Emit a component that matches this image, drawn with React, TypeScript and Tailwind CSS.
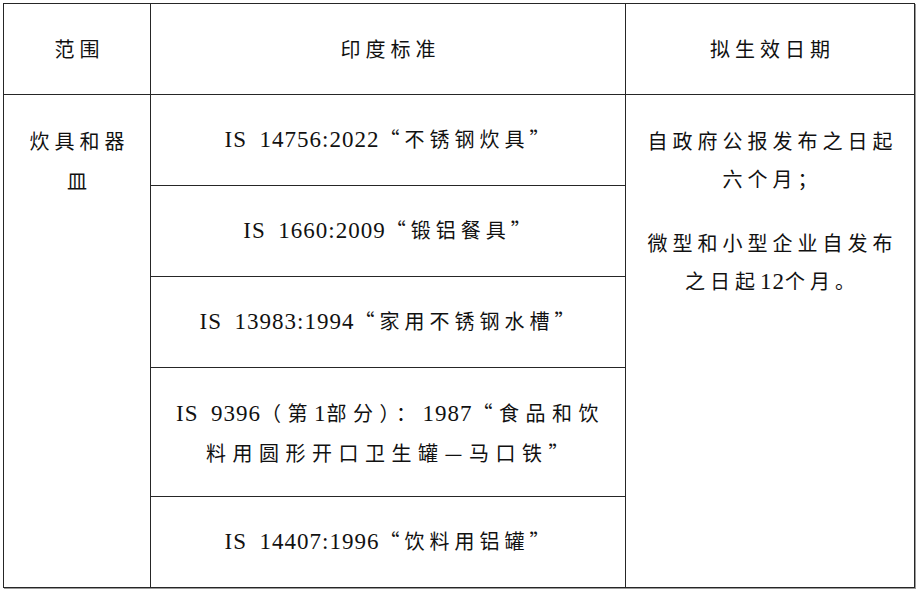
import React from "react";

const EN = "\u2002";

function L({ children }: { children: React.ReactNode }) {
  return (
    <span className="font-['Liberation_Serif',serif] text-[23px] tracking-[1px]">{children}</span>
  );
}

function C({ children, wide }: { children: React.ReactNode; wide?: boolean }) {
  return <span className={wide ? "tracking-[6.5px]" : "tracking-[5px]"}>{children}</span>;
}

export default function App() {
  return (
    <div className="w-[918px] h-[590px] bg-white pt-[3px] pl-[3px] font-['Noto_Sans_CJK_SC',sans-serif] text-[20px] text-[#111]">
      <div className="w-[912px] border-l border-t border-[#262626] shadow-[1px_1px_0_#9a9a9a]">
        {/* header */}
        <div className="flex h-[91px]">
          <div className="w-[147px] border-r border-b border-[#262626] flex items-center justify-center pl-[5px] tracking-[5px]">
            范围
          </div>
          <div className="w-[475px] border-r border-b border-[#262626] flex items-center justify-center pl-[5px] tracking-[5px]">
            印度标准
          </div>
          <div className="w-[289px] border-r border-b border-[#262626] flex items-center justify-center pl-[5px] tracking-[5px]">
            拟生效日期
          </div>
        </div>
        {/* body */}
        <div className="flex">
          <div className="w-[147px] h-[493px] border-r border-b border-[#262626] pt-[26px] pl-[5px] text-center leading-[40px] tracking-[5px]">
            炊具和器
            <br />皿
          </div>
          <div className="w-[475px] flex flex-col">
            <div className="h-[91px] border-r border-b border-[#262626] flex items-center justify-center pl-[3px]">
              <span>
                <L>IS{EN}14756:2022</L>
                <C>“不锈钢炊具”</C>
              </span>
            </div>
            <div className="h-[91px] border-r border-b border-[#262626] flex items-center justify-center pl-[3px]">
              <span>
                <L>IS{EN}1660:2009</L>
                <C>“锻铝餐具”</C>
              </span>
            </div>
            <div className="h-[91px] border-r border-b border-[#262626] flex items-center justify-center pl-[3px]">
              <span>
                <L>IS{EN}13983:1994</L>
                <C>“家用不锈钢水槽”</C>
              </span>
            </div>
            <div className="h-[129px] border-r border-b border-[#262626] flex items-center justify-center pl-[5px] text-center leading-[39px]">
              <span>
                <L>IS{EN}9396</L>
                <C wide>（第</C>
                <L>1</L>
                <C wide>部分）：</C>
                <L>1987</L>
                <C wide>“食品和饮</C>
                <br />
                <C wide>料用圆形开口卫生罐—马口铁”</C>
              </span>
            </div>
            <div className="h-[91px] border-r border-b border-[#262626] flex items-center justify-center pl-[3px]">
              <span>
                <L>IS{EN}14407:1996</L>
                <C>“饮料用铝罐”</C>
              </span>
            </div>
          </div>
          <div className="w-[289px] h-[493px] border-r border-b border-[#262626] pt-[27px] pl-[5px] text-center leading-[38px] tracking-[5px]">
            <p>
              自政府公报发布之日起
              <br />
              六个月；
            </p>
            <p className="mt-[26px]">
              微型和小型企业自发布
              <br />
              之日起<L>12</L>个月。
            </p>
          </div>
        </div>
      </div>
    </div>
  );
}
